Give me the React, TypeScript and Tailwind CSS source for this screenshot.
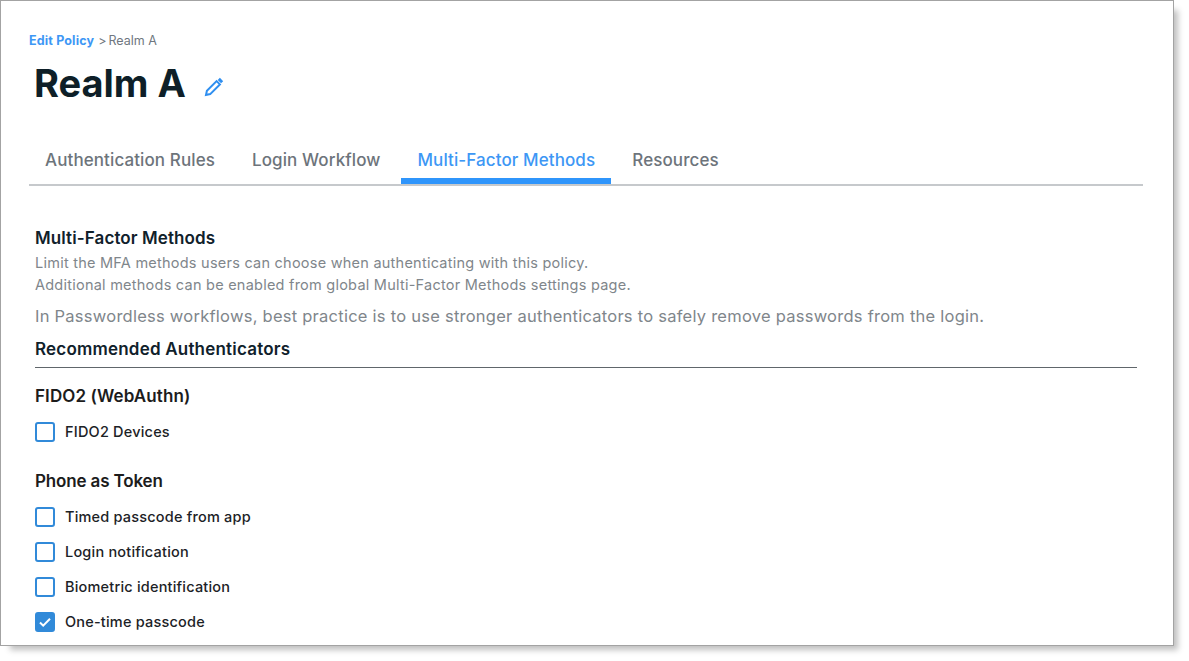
import React from 'react';

const tabs = ['Authentication Rules', 'Login Workflow', 'Multi-Factor Methods', 'Resources'];

const Option = ({ label, checked = false }: { label: string; checked?: boolean }) => (
    <label className="flex h-[35px] items-center">
        <span
            className={`flex h-5 w-5 items-center justify-center rounded-[3px] border-2 border-[#318ad9] ${checked ? 'bg-[#318ad9]' : 'bg-white'}`}
        >
            {checked && (
                <svg viewBox="0 0 16 16" className="h-4 w-4" fill="none">
                    <path d="M3 8.5l3.2 3.2L13 4.8" stroke="#fff" strokeWidth="2" />
                </svg>
            )}
        </span>
        <span className="ml-[10px] text-[14.5px] font-medium tracking-[0.2px] text-[#1c2226]">{label}</span>
    </label>
);

export default function App() {
    return (
        <div className="h-[661px] w-[1189px] overflow-hidden bg-white font-['Inter',sans-serif]">
            <div className="h-[646px] w-[1174px] overflow-hidden border border-[#a3a3a3] bg-white pl-[28px] pr-[30px] pt-[32px] shadow-[7px_7px_6px_-3px_rgba(0,0,0,0.25)]">
                <div className="flex h-4 items-center text-[12.5px] leading-4">
                    <span className="font-bold tracking-[0.15px] text-[#3d97f5]">Edit Policy</span>
                    <span className="ml-[4px] mr-[2px] text-[#6f7780]">&gt;</span>
                    <span className="text-[#6f7780]">Realm A</span>
                </div>

                <div className="ml-[5px] mt-[9px] flex h-[50px] items-center">
                    <h1 className="text-[38px] font-bold leading-[50px] text-[#0e1f28]">Realm A</h1>
                    <svg viewBox="0 0 20 20" className="ml-[18px] mt-[8px] h-5 w-5" fill="none" stroke="#2f8ff0" strokeWidth="2">
                        <path d="M2 18l.9-4.2L12.6 4.1l3.3 3.3-9.7 9.7z" />
                        <path d="M14.8 1.9l3.3 3.3" strokeWidth="3" />
                    </svg>
                </div>

                <div className="mt-[30px] flex h-[48px] gap-[5px] border-b-2 border-[#c6c9cc]">
                    {tabs.map((tab) => (
                        <div
                            key={tab}
                            className={`flex h-[46px] items-center border-b-[6px] px-[16px] pt-[6px] text-[17px] font-medium tracking-[0.1px] ${tab === 'Multi-Factor Methods' ? 'border-[#2f95fb] text-[#3d97f5]' : 'border-transparent text-[#6d747b]'}`}
                        >
                            {tab}
                        </div>
                    ))}
                </div>

                <div className="pl-[6px] pr-[6px]">
                    <h2 className="mt-[41px] text-[17px] font-semibold leading-[22px] tracking-[0.1px] text-[#10212b]">Multi-Factor Methods</h2>
                    <p className="mt-[3px] text-[14.5px] leading-[22px] tracking-[0.24px] text-[#80868b]">
                        Limit the MFA methods users can choose when authenticating with this policy.
                        <br />
                        Additional methods can be enabled from global Multi-Factor Methods settings page.
                    </p>
                    <p className="mt-[9px] whitespace-nowrap text-[16.5px] leading-[22px] tracking-[0.25px] text-[#80868b]">
                        In Passwordless workflows, best practice is to use stronger authenticators to safely remove passwords from the login.
                    </p>
                    <h2 className="mt-[11px] border-b border-[#60666b] pb-[7px] text-[17px] font-semibold leading-[22px] tracking-[0.2px] text-[#10212b]">
                        Recommended Authenticators
                    </h2>
                    <h3 className="mt-[17px] text-[17px] font-semibold leading-[22px] tracking-[0.1px] text-[#1c1c1c]">FIDO2 (WebAuthn)</h3>
                    <div className="mt-[7px]">
                        <Option label="FIDO2 Devices" />
                    </div>
                    <h3 className="mt-[21px] text-[17px] font-semibold leading-[22px] tracking-[-0.15px] text-[#1c1c1c]">Phone as Token</h3>
                    <div className="mt-[7px]">
                        <Option label="Timed passcode from app" />
                        <Option label="Login notification" />
                        <Option label="Biometric identification" />
                        <Option label="One-time passcode" checked />
                    </div>
                </div>
            </div>
        </div>
    );
}
